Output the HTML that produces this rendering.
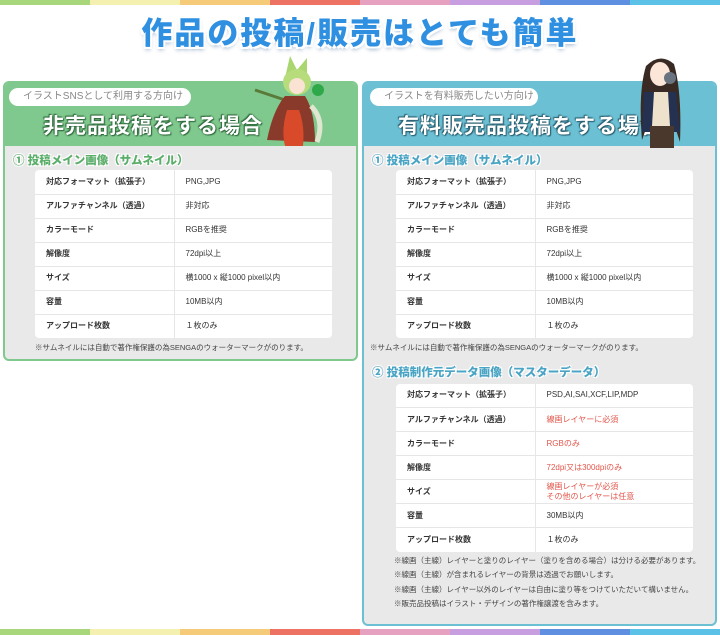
<!DOCTYPE html>
<html><head><meta charset="utf-8"><style>
*{margin:0;padding:0;box-sizing:border-box}
body{width:720px;height:635px;background:#fff;position:relative;overflow:hidden;font-family:"Liberation Sans","Noto Sans CJK JP",sans-serif;}
.stripe{position:absolute;left:0;width:720px;height:5px;display:flex}
.stripe div{flex:1}
.title{position:absolute;top:8px;left:0;width:720px;text-align:center;font-size:31px;font-weight:900;color:#2f8fe0;letter-spacing:2px;
text-shadow:0 0 2px #fff,2px 2px 0 #fff,-2px -2px 0 #fff,2px -2px 0 #fff,-2px 2px 0 #fff,0 3px 4px rgba(0,60,120,.4);}
.panel{position:absolute;top:81px;border-radius:6px;overflow:hidden;background:#e9e9e9}
.hdr{height:65px;position:relative}
.pill{position:absolute;top:7px;height:18px;background:#fff;border-radius:9px;font-size:10px;color:#888;line-height:18px;padding-left:14px}
.ht{position:absolute;top:29px;font-size:21px;font-weight:700;color:#fff;letter-spacing:1px}
.sec{font-size:11.5px;font-weight:900;margin:6px 0 0 8px;height:18px;text-shadow:1px 1px 0 #fff,-1px -1px 0 #fff,1px -1px 0 #fff,-1px 1px 0 #fff}
table{border-collapse:collapse;background:#fff;border-radius:4px;font-size:8px;color:#333}
td{height:24px;border-bottom:1px solid #e6e6e6;padding-left:11px;line-height:10px}
td.l{border-right:1px solid #e6e6e6;font-weight:700}
tr:last-child td{border-bottom:none}
.red{color:#e2574c}
.note{font-size:7.5px;color:#444;line-height:14.5px}
</style></head><body>
<div class="stripe" style="top:0"><div style="background:#a8d67a"></div><div style="background:#f3f0b0"></div><div style="background:#f5cb7a"></div><div style="background:#ee7264"></div><div style="background:#e6a0c0"></div><div style="background:#c79ee0"></div><div style="background:#5f8fe0"></div><div style="background:#5cc1e6"></div></div>
<div class="stripe" style="top:629px;height:6px"><div style="background:#a8d67a"></div><div style="background:#f3f0b0"></div><div style="background:#f5cb7a"></div><div style="background:#ee7264"></div><div style="background:#e6a0c0"></div><div style="background:#c79ee0"></div><div style="background:#5f8fe0"></div><div style="background:#5cc1e6"></div></div>
<div class="title">作品の投稿/販売はとても簡単</div>

<div class="panel" style="left:3px;width:355px;height:280px;border:2px solid #80c98e">
 <div class="hdr" style="background:#80c98e;margin:-2px -2px 0">
  <div class="pill" style="left:6px;width:182px">イラストSNSとして利用する方向け</div>
  <div class="ht" style="left:40px;text-shadow:0 0 2px #2e6a3c,1px 1px 1px #2e6a3c,-1px -1px 1px #2e6a3c">非売品投稿をする場合</div>
 </div>
 <div class="sec" style="color:#5cae6b">① 投稿メイン画像（サムネイル）</div>
 <table style="margin-left:30px;width:297px">
 <tr><td class="l" style="width:139px">対応フォーマット（拡張子）</td><td>PNG,JPG</td></tr>
 <tr><td class="l">アルファチャンネル（透過）</td><td>非対応</td></tr>
 <tr><td class="l">カラーモード</td><td>RGBを推奨</td></tr>
 <tr><td class="l">解像度</td><td>72dpi以上</td></tr>
 <tr><td class="l">サイズ</td><td>横1000 x 縦1000 pixel以内</td></tr>
 <tr><td class="l">容量</td><td>10MB以内</td></tr>
 <tr><td class="l">アップロード枚数</td><td>１枚のみ</td></tr>
 </table>
 <div class="note" style="margin:3px 0 0 30px">※サムネイルには自動で著作権保護の為SENGAのウォーターマークがのります。</div>
</div>

<div class="panel" style="left:362px;width:355px;height:545px;border:2px solid #6cc0d4">
 <div class="hdr" style="background:#6cc0d4;margin:-2px -2px 0">
  <div class="pill" style="left:8px;width:168px">イラストを有料販売したい方向け</div>
  <div class="ht" style="left:36px;text-shadow:0 0 2px #285e70,1px 1px 1px #285e70,-1px -1px 1px #285e70">有料販売品投稿をする場合</div>
 </div>
 <div class="sec" style="color:#4aa4c4">① 投稿メイン画像（サムネイル）</div>
 <table style="margin-left:32px;width:297px">
 <tr><td class="l" style="width:139px">対応フォーマット（拡張子）</td><td>PNG,JPG</td></tr>
 <tr><td class="l">アルファチャンネル（透過）</td><td>非対応</td></tr>
 <tr><td class="l">カラーモード</td><td>RGBを推奨</td></tr>
 <tr><td class="l">解像度</td><td>72dpi以上</td></tr>
 <tr><td class="l">サイズ</td><td>横1000 x 縦1000 pixel以内</td></tr>
 <tr><td class="l">容量</td><td>10MB以内</td></tr>
 <tr><td class="l">アップロード枚数</td><td>１枚のみ</td></tr>
 </table>
 <div class="note" style="margin:3px 0 0 6px">※サムネイルには自動で著作権保護の為SENGAのウォーターマークがのります。</div>
 <div class="sec" style="color:#4aa4c4;margin-top:8px">② 投稿制作元データ画像（マスターデータ）</div>
 <table style="margin-left:32px;width:297px;margin-top:2px">
 <tr><td class="l" style="width:139px">対応フォーマット（拡張子）</td><td>PSD,AI,SAI,XCF,LIP,MDP</td></tr>
 <tr><td class="l">アルファチャンネル（透過）</td><td class="red">線画レイヤーに必須</td></tr>
 <tr><td class="l">カラーモード</td><td class="red">RGBのみ</td></tr>
 <tr><td class="l">解像度</td><td class="red">72dpi又は300dpiのみ</td></tr>
 <tr><td class="l">サイズ</td><td class="red">線画レイヤーが必須<br>その他のレイヤーは任意</td></tr>
 <tr><td class="l">容量</td><td>30MB以内</td></tr>
 <tr><td class="l">アップロード枚数</td><td>１枚のみ</td></tr>
 </table>
 <div class="note" style="margin:2px 0 0 30px">※線画（主線）レイヤーと塗りのレイヤー（塗りを含める場合）は分ける必要があります。<br>※線画（主線）が含まれるレイヤーの背景は透過でお願いします。<br>※線画（主線）レイヤー以外のレイヤーは自由に塗り等をつけていただいて構いません。<br>※販売品投稿はイラスト・デザインの著作権譲渡を含みます。</div>
</div>

<svg style="position:absolute;left:245px;top:50px" width="90" height="98">
 <path d="M40 28 L45 6 L52 20 L62 8 L62 30 Z" fill="#a9d66e"/>
 <ellipse cx="52" cy="32" rx="14" ry="13" fill="#b6dc7c"/>
 <ellipse cx="52" cy="36" rx="8" ry="8" fill="#fbe3d4"/>
 <circle cx="73" cy="40" r="6" fill="#2fa84a"/>
 <path d="M10 40 L40 50" stroke="#5a7a3a" stroke-width="3"/>
 <path d="M40 46 Q28 60 22 90 L70 92 Q70 62 60 46 Z" fill="#8a3a2a"/>
 <path d="M42 60 Q36 80 40 96 L58 96 Q60 76 54 60 Z" fill="#d84a2a"/>
 <path d="M66 56 Q80 70 72 92" stroke="#dfe7d0" stroke-width="5" fill="none"/>
</svg>
<svg style="position:absolute;left:630px;top:52px" width="65" height="96">
 <path d="M16 14 Q30 0 44 12 Q52 40 50 90 L40 60 L22 60 L12 88 Q8 40 16 14Z" fill="#3a2a24"/>
 <ellipse cx="30" cy="22" rx="10" ry="12" fill="#fbe6d8"/>
 <circle cx="40" cy="26" r="6" fill="#6a7480"/>
 <path d="M14 40 L46 40 L50 80 L12 80 Z" fill="#253150"/>
 <path d="M24 40 L38 40 L40 74 L22 74 Z" fill="#efe2cc"/>
 <path d="M20 74 L44 74 L44 96 L20 96 Z" fill="#4a382c"/>
</svg>
</body></html>
